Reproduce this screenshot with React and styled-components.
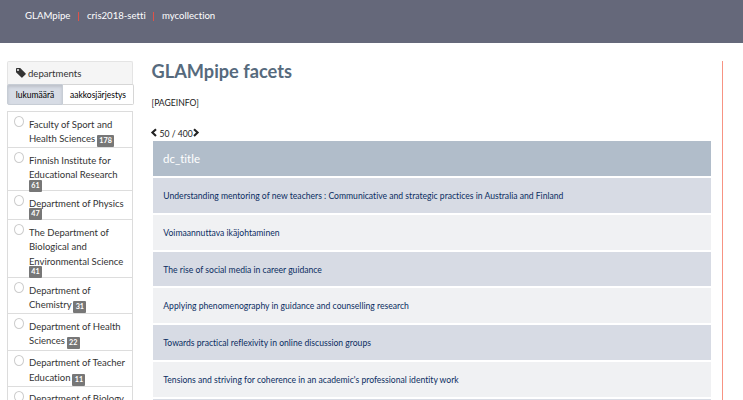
import React from 'react';
import styled, { createGlobalStyle } from 'styled-components';

const Global = createGlobalStyle`
  * { box-sizing: border-box; }
  html, body { margin: 0; height: 400px; overflow: hidden; background: #fff; }
  body { font-family: Lato, sans-serif; color: #222; font-variant-ligatures: none; }
`;

const Header = styled.header`
  height: 43px;
  background: #65687a;
  display: flex;
  align-items: flex-start;
  padding: 7px 0 0 25px;
  color: #fff;
  font-size: 9.6px;
  line-height: 18px;
`;
const Crumb = styled.span`
  white-space: nowrap;
  width: ${(p) => p.$w}px;
`;
const Divider = styled.i`
  width: 1px;
  height: 9px;
  margin: 5px 8px 0 7px;
  background: #e05248;
`;
const Page = styled.main`
  display: flex;
  height: 357px;
  overflow: hidden;
  padding: 18px 0 0 7px;
`;
const Sidebar = styled.aside`
  width: 127px;
  flex: none;
`;
const PanelTitle = styled.div`
  height: 24px;
  width: 126px;
  display: flex;
  align-items: center;
  gap: 2px;
  padding: 0 0 1px 8px;
  border: 1px solid #e4e4e4;
  border-bottom: 0;
  border-radius: 2px 2px 0 0;
  background: #f5f5f5;
  color: #333;
  font-size: 9.6px;
`;
const Tabs = styled.div`
  display: flex;
  height: 21px;
  margin-top: -1px;
`;
const Tab = styled.div`
  width: ${(p) => p.$w}px;
  border: 1px solid ${(p) => (p.$active ? '#c7cdd5' : '#d6d6d6')};
  border-left-width: ${(p) => (p.$active ? 1 : 0)}px;
  border-radius: ${(p) => (p.$active ? '2px 0 0 2px' : '0 2px 2px 0')};
  background: ${(p) => (p.$active ? '#d7dce5' : '#fff')};
  box-shadow: ${(p) => (p.$active ? 'inset 0 2px 3px rgba(0,0,0,.12)' : 'none')};
  color: #000;
  font-size: 8.5px;
  line-height: 20px;
  text-align: center;
  white-space: nowrap;
`;
const FacetList = styled.div`
  width: 126px;
  margin-top: 6px;
  border: solid #dcdcdc;
  border-width: 1px 1px 0;
`;
const Facet = styled.div`
  display: flex;
  height: ${(p) => p.$h}px;
  padding: 4px 0 0 6px;
  border-bottom: 1px solid #ddd;
`;
const Radio = styled.span`
  flex: none;
  width: 10px;
  height: 11px;
  margin: 0 5px 0 0;
  border: 1px solid #ccc;
  border-radius: 50%;
`;
const FacetText = styled.div`
  color: #333;
  padding-top: 1.5px;
  font-size: 9.5px;
  line-height: 14.5px;
  white-space: nowrap;
`;
const Badge = styled.span`
  display: ${(p) => (p.$below ? 'table' : 'inline-block')};
  height: 12px;
  margin: ${(p) => (p.$below ? '-3px 0 0' : '0 0 0 -0.5px')};
  padding: 0 2.3px;
  border-radius: 1px;
  background: #777;
  color: #fff;
  font-size: 7.2px;
  font-weight: 700;
  line-height: 12px;
  vertical-align: ${(p) => (p.$below ? 'top' : '-1px')};
`;
const Content = styled.section`
  width: 589px;
  padding-left: 17.5px;
  border-right: 1px solid #f79383;
`;
const Title = styled.h1`
  margin: 0;
  color: #566a7d;
  font-size: 18.2px;
  line-height: 21px;
`;
const PageInfo = styled.div`
  margin-top: 13px;
  font-size: 8.6px;
  line-height: 17px;
`;
const Pager = styled.div`
  display: flex;
  align-items: center;
  height: 17px;
  margin: 13px 0 0 -1.5px;
  font-size: 8.6px;
`;
const Table = styled.div`
  display: grid;
  grid-auto-rows: 34.85px;
  gap: 2px;
  width: 558px;
  margin: -1px 0 0 1.5px;
`;
const HeadRow = styled.div`
  padding-left: 10px;
  background: #b1bdca;
  color: #fff;
  font-size: 11.5px;
  line-height: 35px;
`;
const Row = styled.div`
  padding-left: 10.3px;
  background: ${(p) => (p.$odd ? '#d7dbe4' : '#f0f1f3')};
  color: #0a2d62;
  font-size: 8.6px;
  line-height: 36.6px;
  white-space: nowrap;
`;

const TagIcon = () => (
  <svg width="10" height="10" viewBox="0 0 10 10">
    <path fillRule="evenodd" fill="#333" d="M0 .8Q0 0 .8 0H4.2L9.7 5.4Q10 5.8 9.7 6.2L6.3 9.6Q5.9 10 5.5 9.6L0 4.2ZM2 1a1 1 0 1 0 0 2a1 1 0 1 0 0-2Z" />
  </svg>
);
const ChevronSvg = styled.svg`
  width: 8px;
  height: 10px;
  margin: ${(p) => (p.$right ? '-2px 0 0 -1px' : '-2px 1.5px 0 0')};
`;
const Chevron = ({ right }) => (
  <ChevronSvg $right={right} viewBox="0 0 8 10">
    <path d={right ? 'M2 1.2L5.6 4.6L2 8' : 'M6 1.2L2.4 4.6L6 8'} fill="none" stroke="#222" strokeWidth="2.1" />
  </ChevronSvg>
);

const facets = [
  [['Faculty of Sport and', 'Health Sciences'], 178, 36.2],
  [['Finnish Institute for', 'Educational Research'], 61, 43.3, true],
  [['Department of Physics'], 47, 28.9, true],
  [['The Department of', 'Biological and', 'Environmental Science'], 41, 57.8, true],
  [['Department of', 'Chemistry'], 31, 36.2],
  [['Department of Health', 'Sciences'], 22, 36.2],
  [['Department of Teacher', 'Education'], 11, 36.2],
  [['Department of Biology'], null, 36.2],
];
const titles = [
  'Understanding mentoring of new teachers : Communicative and strategic practices in Australia and Finland',
  'Voimaannuttava ikäjohtaminen',
  'The rise of social media in career guidance',
  'Applying phenomenography in guidance and counselling research',
  'Towards practical reflexivity in online discussion groups',
  "Tensions and striving for coherence in an academic's professional identity work",
  '',
];

export default function App() {
  return (
    <>
      <Global />
      <Header>
        <Crumb $w={46}>GLAMpipe</Crumb>
        <Divider />
        <Crumb $w={59}>cris2018-setti</Crumb>
        <Divider />
        <Crumb $w={54}>mycollection</Crumb>
      </Header>
      <Page>
        <Sidebar>
          <PanelTitle><TagIcon />departments</PanelTitle>
          <Tabs>
            <Tab $active $w={56}>lukumäärä</Tab>
            <Tab $w={71}>aakkosjärjestys</Tab>
          </Tabs>
          <FacetList>
            {facets.map(([lines, count, h, below]) => (
              <Facet key={lines.join()} $h={h}>
                <Radio />
                <FacetText>
                  {lines.map((line, i) => (
                    <div key={line}>
                      {line}
                      {count && !below && i === lines.length - 1 && <> <Badge>{count}</Badge></>}
                    </div>
                  ))}
                  {below && <Badge $below>{count}</Badge>}
                </FacetText>
              </Facet>
            ))}
          </FacetList>
        </Sidebar>
        <Content>
          <Title>GLAMpipe facets</Title>
          <PageInfo>[PAGEINFO]</PageInfo>
          <Pager><Chevron />50 / 400<Chevron right /></Pager>
          <Table>
            <HeadRow>dc_title</HeadRow>
            {titles.map((t, i) => <Row key={i} $odd={i % 2 === 0}>{t}</Row>)}
          </Table>
        </Content>
      </Page>
    </>
  );
}
